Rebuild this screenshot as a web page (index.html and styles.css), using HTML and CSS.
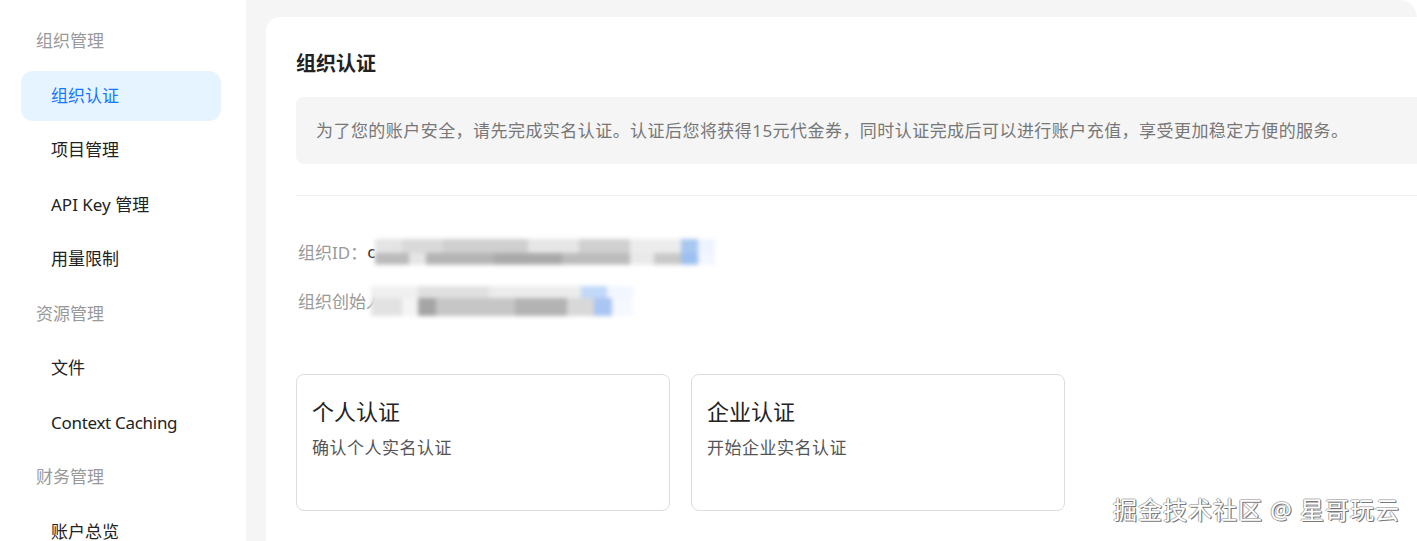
FILE: index.html
```html
<!DOCTYPE html>
<html lang="zh-CN">
<head>
  <meta charset="UTF-8" />
  <title>组织认证</title>
  <link rel="stylesheet" href="styles.css">
</head>
<body>

  <div class="layout">
    <aside class="sidebar">
      <div class="menu-group">组织管理</div>
      <div class="menu-item active">组织认证</div>
      <div class="menu-item">项目管理</div>
      <div class="menu-item">API Key 管理</div>
      <div class="menu-item">用量限制</div>
      <div class="menu-group">资源管理</div>
      <div class="menu-item">文件</div>
      <div class="menu-item latin">Context Caching</div>
      <div class="menu-group">财务管理</div>
      <div class="menu-item">账户总览</div>
    </aside>

    <main class="main">
      <div class="card">
        <h2 class="card-title">组织认证</h2>

        <div class="notice">
          为了您的账户安全，请先完成实名认证。认证后您将获得15元代金券，同时认证完成后可以进行账户充值，享受更加稳定方便的服务。
        </div>

        <div class="divider"></div>

        <div class="info">
          <div class="info-row">
            <span class="info-label">组织ID：</span>
            <span class="info-value">c</span>
            <span class="mosaic mosaic-id"></span>
          </div>
          <div class="info-row">
            <span class="info-label">组织创始人</span>
            <span class="mosaic mosaic-owner"></span>
          </div>
        </div>

        <div class="auth-list">
          <div class="auth-card">
            <div class="auth-title">个人认证</div>
            <div class="auth-desc">确认个人实名认证</div>
          </div>
          <div class="auth-card">
            <div class="auth-title">企业认证</div>
            <div class="auth-desc">开始企业实名认证</div>
          </div>
        </div>
      </div>
    </main>
  </div>

  <div class="watermark">掘金技术社区 @ 星哥玩云</div>

</body>
</html>
```

FILE: styles.css
```css
body {
  margin: 0;
  font-family: 'Noto Sans', 'Noto Sans CJK SC', sans-serif;
  background-color: #fff;
  color: #222;
  overflow: hidden;
}

.layout {
  display: flex;
  height: 541px;
}

/* 侧边栏 */
.sidebar {
  width: 246px;
  flex-shrink: 0;
  display: flex;
  flex-direction: column;
  gap: 4.5px;
  padding-top: 16px;
  box-sizing: border-box;
}

.menu-group,
.menu-item {
  height: 50px;
  line-height: 50px;
  font-size: 17px;
  flex-shrink: 0;
}

.menu-group {
  padding-left: 36px;
  color: #999;
}

.menu-item {
  margin-left: 21px;
  width: 200px;
  padding-left: 30px;
  box-sizing: border-box;
  border-radius: 12px;
  color: #222;
}

.menu-item.latin {
  letter-spacing: -0.3px;
}

.menu-item.active {
  background-color: #e6f4ff;
  color: #1677ff;
}

/* 主区域 */
.main {
  flex: 1;
  background-color: #f5f5f5;
  padding: 17px 0 0 20px;
  border-top-right-radius: 18px;
  overflow: hidden;
}

.card {
  background: #fff;
  height: 100%;
  border-top-left-radius: 14px;
  padding: 33px 0 0 30px;
  box-sizing: border-box;
}

.card-title {
  margin: 0;
  font-size: 20px;
  line-height: 28px;
  font-weight: 700;
  color: #222;
}

.notice {
  margin-top: 19px;
  height: 67px;
  line-height: 67px;
  padding-left: 20px;
  background-color: #f5f5f5;
  border-radius: 8px 0 0 8px;
  font-size: 17px;
  letter-spacing: 0.45px;
  color: #777;
  white-space: nowrap;
}

.divider {
  margin-top: 31px;
  height: 1px;
  background-color: #f0f0f0;
}

.info {
  padding-top: 31px;
  padding-left: 2px;
}

.info-row {
  display: flex;
  align-items: center;
  height: 49px;
  font-size: 17px;
  color: #999;
}

.info-value {
  color: #333;
}

.mosaic {
  display: inline-block;
  height: 26px;
  filter: blur(2px);
}

.mosaic-id {
  width: 340px;
  background:
    linear-gradient(90deg, #e4e4e4 0 8%, #d9d9d9 8% 20%, #cfcfcf 20% 45%, #e6e6e6 45% 60%, #d0d0d0 60% 75%, #ececec 75% 90%, #a8c8f0 90% 95%, #eef4ff 95%) top / 100% 55% no-repeat,
    linear-gradient(90deg, #bbb 0 10%, #e5e5e5 10% 15%, #b4b4b4 15% 35%, #a9a9a9 35% 55%, #bcbcbc 55% 75%, #e9e9e9 75% 82%, #c9c9c9 82% 90%, #9dbff0 90% 95%, #f2f6ff 95%) bottom / 100% 45% no-repeat;
}

.mosaic-owner {
  width: 262px;
  height: 30px;
  margin-left: -12px;
  background:
    linear-gradient(90deg, #f0f0f0 0 18%, #e0e0e0 18% 45%, #ececec 45% 80%, #c2d8f8 80% 90%, #f2f6ff 90%) top / 100% 40% no-repeat,
    linear-gradient(90deg, #e2e2e2 0 12%, #f4f4f4 12% 18%, #a5a5a5 18% 25%, #c6c6c6 25% 55%, #b3b3b3 55% 75%, #d8d8d8 75% 85%, #a9c6f2 85% 92%, #f5f8ff 92%) bottom / 100% 60% no-repeat;
}

/* 认证卡片 */
.auth-list {
  display: flex;
  gap: 21px;
  margin-top: 49px;
}

.auth-card {
  width: 374px;
  height: 137px;
  border: 1px solid #ddd;
  border-radius: 8px;
  box-sizing: border-box;
  padding: 21px 15px 0 15px;
}

.auth-title {
  font-size: 22px;
  line-height: 30px;
  color: #222;
}

.auth-desc {
  margin-top: 10px;
  font-size: 17px;
  line-height: 24px;
  letter-spacing: 0.5px;
  color: #555;
}

/* 水印 */
.watermark {
  position: absolute;
  right: 17px;
  bottom: 16px;
  font-size: 24px;
  line-height: 30px;
  color: #fff;
  letter-spacing: 1px;
  text-shadow: 1px 1px 0 #777, -1px 0 0 #aaa, 0 -1px 0 #bbb, 1px 0 0 #888;
}
```
